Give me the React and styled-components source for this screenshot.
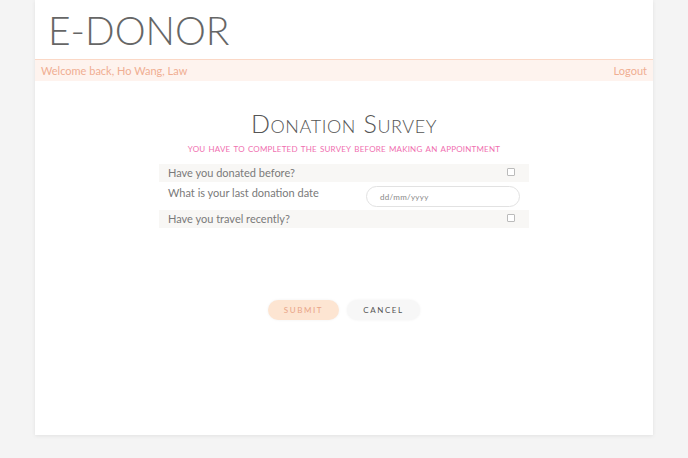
import React from "react";
import styled, { createGlobalStyle } from "styled-components";

const Global = createGlobalStyle`
  html, body { margin: 0; padding: 0; background: #f4f4f4; }
  body { font-family: "Lato", "Open Sans", sans-serif; }
  * { box-sizing: border-box; }
`;

const Page = styled.div`
  width: 688px;
  height: 458px;
  display: flex;
  justify-content: center;
  align-items: flex-start;
`;

const Card = styled.div`
  width: 618px;
  height: 435px;
  background: #fff;
  box-shadow: 0 1px 4px rgba(0, 0, 0, 0.08);
  display: flex;
  flex-direction: column;
`;

const Brand = styled.h1`
  margin: 0;
  height: 59px;
  padding: 9px 0 0 13px;
  font-family: "Lato", sans-serif;
  font-weight: 300;
  font-size: 39px;
  letter-spacing: 0;
  color: #666;
  line-height: 42px;
`;

const WelcomeBar = styled.div`
  height: 22px;
  border-top: 1px solid #fbd8c6;
  background: #fef3ee;
  display: flex;
  justify-content: space-between;
  align-items: center;
  padding: 0 6px;
  font-size: 11px;
  color: #f0ae92;
`;

const Main = styled.div`
  display: flex;
  flex-direction: column;
  align-items: center;
  padding-top: 27px;
`;

const Title = styled.h2`
  margin: 0;
  font-weight: 300;
  font-variant: small-caps;
  font-size: 25px;
  letter-spacing: 0.6px;
  color: #555;
  line-height: 30px;
`;

const Subtitle = styled.div`
  margin-top: 2px;
  font-variant: small-caps;
  font-size: 11.3px;
  letter-spacing: 0.2px;
  color: #f06fb0;
  line-height: 16px;
`;

const Form = styled.div`
  margin-top: 8px;
  width: 370px;
  display: flex;
  flex-direction: column;
  gap: 2px;
`;

const Row = styled.div`
  display: flex;
  justify-content: space-between;
  align-items: ${(p) => (p.$top ? "flex-start" : "center")};
  height: ${(p) => p.$h || 18}px;
  padding: 0 14px 0 9px;
  background: ${(p) => (p.$shaded ? "#f8f7f5" : "transparent")};
  font-size: 11px;
  color: #7a7a7a;
`;

const Label = styled.span`
  line-height: 18px;
`;

const Check = styled.span`
  width: 8px;
  height: 8px;
  border: 1px solid #bbb;
  border-radius: 1px;
  background: #fff;
  margin-top: -2px;
`;

const DateInput = styled.div`
  margin-top: 2px;
  width: 154px;
  height: 21px;
  border: 1px solid #e2e2e2;
  border-radius: 11px;
  font-size: 8px;
  color: #888;
  display: flex;
  align-items: center;
  padding-left: 13px;
  letter-spacing: 0.3px;
  margin-right: -5px;
`;

const Buttons = styled.div`
  margin-top: 72px;
  display: flex;
  gap: 8px;
`;

const Button = styled.button`
  width: ${(p) => p.$w}px;
  height: 20px;
  border: none;
  border-radius: 10px;
  font-family: "Lato", sans-serif;
  font-size: 8px;
  letter-spacing: 1.6px;
  text-transform: uppercase;
  background: ${(p) => (p.$primary ? "#fde5d2" : "#f7f7f7")};
  color: ${(p) => (p.$primary ? "#e9a487" : "#555")};
  box-shadow: 0 0 3px rgba(0, 0, 0, 0.06);
  padding: 0;
`;

export default function App() {
  return (
    <>
      <Global />
      <Page>
        <Card>
          <Brand>E-DONOR</Brand>
          <WelcomeBar>
            <span>Welcome back, Ho Wang, Law</span>
            <span>Logout</span>
          </WelcomeBar>
          <Main>
            <Title>Donation Survey</Title>
            <Subtitle>you have to completed the survey before making an appointment</Subtitle>
            <Form>
              <Row $shaded>
                <Label>Have you donated before?</Label>
                <Check />
              </Row>
              <Row $h={24} $top>
                <Label>What is your last donation date</Label>
                <DateInput>dd/mm/yyyy</DateInput>
              </Row>
              <Row $shaded>
                <Label>Have you travel recently?</Label>
                <Check />
              </Row>
            </Form>
            <Buttons>
              <Button $primary $w={71}>Submit</Button>
              <Button $w={73}>Cancel</Button>
            </Buttons>
          </Main>
        </Card>
      </Page>
    </>
  );
}
